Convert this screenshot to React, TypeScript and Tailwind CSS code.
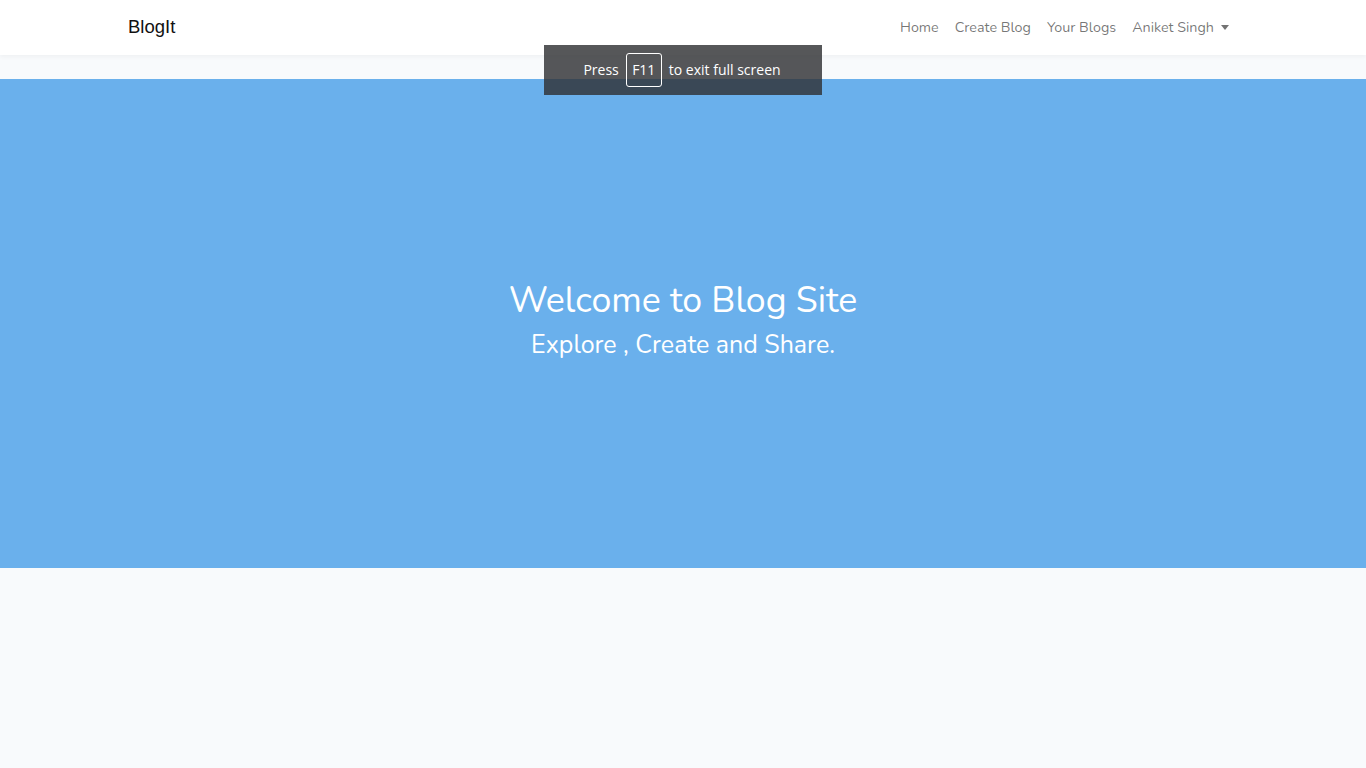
import React from "react";

export default function App() {
  return (
    <div className="min-h-[768px] bg-[#f8fafc] relative" style={{ fontFamily: "Nunito, Lato, 'Noto Sans', sans-serif" }}>
      <nav className="h-[55px] bg-white shadow-[0_2px_4px_rgba(0,0,0,0.04)] flex items-center">
        <div className="w-[1140px] mx-auto px-[15px] flex items-center justify-between">
          <span className="text-[18.5px] text-[#111] font-['Liberation_Sans',sans-serif] -mt-[1px]">BlogIt</span>
          <div className="flex items-center text-[14.3px] text-[rgba(0,0,0,0.55)] mr-[1px]">
            <span className="px-2">Home</span>
            <span className="px-2">Create Blog</span>
            <span className="px-2">Your Blogs</span>
            <span className="px-2 flex items-center">
              Aniket Singh
              <span className="ml-[7px] inline-block w-0 h-0 border-l-[4.5px] border-r-[4.5px] border-t-[5px] border-l-transparent border-r-transparent border-t-[rgba(0,0,0,0.55)]"></span>
            </span>
          </div>
        </div>
      </nav>
      <main className="pt-6">
        <section className="h-[489px] bg-[#6ab0ec] flex flex-col items-center justify-center text-white pb-[8px]">
          <h1 className="text-[35.7px] leading-[43px]">Welcome to Blog Site</h1>
          <p className="text-[25px] leading-[30px] mt-[8.5px]">Explore , Create and Share.</p>
        </section>
      </main>
      <div className="absolute left-[544px] top-[45px] w-[278px] h-[50px] bg-[rgba(47,48,50,0.81)] flex items-center justify-center text-white text-[14px] gap-[8px] pb-[1px] pr-[2px]" style={{ fontFamily: "'Open Sans', 'Noto Sans', sans-serif" }}>
        <span>Press</span>
        <span className="border border-white rounded-[3px] w-[36px] h-[34px] flex items-center justify-center -ml-[1px] -mr-[1px]">F11</span>
        <span>to exit full screen</span>
      </div>
    </div>
  );
}
